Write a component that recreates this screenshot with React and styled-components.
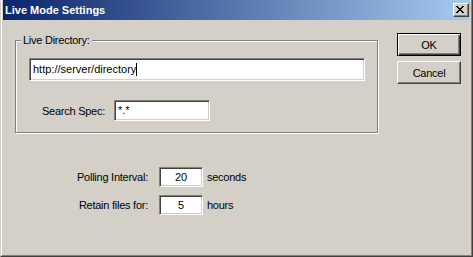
import React from 'react';
import styled, { createGlobalStyle } from 'styled-components';

const Global = createGlobalStyle`
  html, body { margin: 0; padding: 0; background: #d4d0c8; }
  body {
    font-family: "Liberation Sans", Arial, sans-serif;
    font-size: 11px;
    color: #000;
  }
  * { box-sizing: border-box; }
`;

const Frame = styled.div`
  width: 473px;
  height: 257px;
  background: #d4d0c8;
  border-left: 1px solid #d4d0c8;
  border-right: 1px solid #404040;
  border-bottom: 1px solid #404040;
`;

const FrameInner = styled.div`
  height: 100%;
  border-left: 1px solid #fff;
  border-right: 1px solid #808080;
  border-bottom: 1px solid #808080;
  padding: 0 1px 1px 1px;
  display: flex;
  flex-direction: column;
`;

const TitleBar = styled.div`
  height: 20px;
  display: flex;
  align-items: center;
  padding-left: 2px;
  padding-right: 1px;
  background: linear-gradient(to right, #0a246a, #a6caf0);
`;

const Title = styled.div`
  flex: 1;
  color: #fff;
  font-weight: bold;
  font-size: 11px;
  letter-spacing: 0;
  white-space: nowrap;
`;

const CloseButton = styled.div`
  width: 16px;
  height: 14px;
  background: #d4d0c8;
  border: 1px solid;
  border-color: #fff #404040 #404040 #fff;
  box-shadow: inset -1px -1px 0 #808080;
  display: flex;
  align-items: flex-start;
  justify-content: flex-start;
  padding: 2px 0 0 2px;
  svg { display: block; }
`;

const Body = styled.div`
  flex: 1;
  display: flex;
  padding: 12px 0 0 12px;
  margin-top: 1px;
`;

const LeftCol = styled.div`
  width: 363px;
  padding-top: 7px;
  display: flex;
  flex-direction: column;
`;

const GroupBox = styled.div`
  position: relative;
  height: 93px;
  border: 1px solid #808080;
  box-shadow: inset 1px 1px 0 #fff, 1px 1px 0 #fff;
  padding: 17px 0 0 13px;
  display: flex;
  flex-direction: column;
`;

const Legend = styled.div`
  position: absolute;
  top: -7px;
  left: 5px;
  padding: 0 2px;
  line-height: 13px;
  background: #d4d0c8;
  letter-spacing: -0.25px;
  white-space: nowrap;
`;

const Field = styled.div`
  width: ${p => p.$w}px;
  height: ${p => p.$h}px;
  background: #fff;
  border: 1px solid;
  border-color: #808080 #fff #fff #808080;
  box-shadow: inset 1px 1px 0 #404040, inset -1px -1px 0 #d4d0c8;
  display: flex;
  align-items: center;
  justify-content: ${p => (p.$center ? 'center' : 'flex-start')};
  padding-left: ${p => (p.$center ? 0 : 3)}px;
  white-space: nowrap;
  line-height: 13px;
`;

const Caret = styled.span`
  display: inline-block;
  width: 1px;
  height: 13px;
  background: #000;
`;

const SearchRow = styled.div`
  display: flex;
  align-items: center;
  margin-top: 19px;
  margin-left: 13px;
`;

const Label = styled.span`
  letter-spacing: -0.25px;
  white-space: nowrap;
`;

const SearchLabel = styled(Label)`
  width: 72px;
`;

const SettingsGrid = styled.div`
  margin-top: 34px;
  display: grid;
  grid-template-columns: 133px 44px auto;
  column-gap: 11px;
  row-gap: 8px;
  align-items: center;
`;

const UnitLabel = styled(Label)`
  margin-left: -7px;
`;

const RowLabel = styled(Label)`
  text-align: right;
`;

const ButtonCol = styled.div`
  margin-left: 19px;
  display: flex;
  flex-direction: column;
  gap: 5px;
`;

const Button = styled.div`
  width: 64px;
  height: 23px;
  display: flex;
  align-items: center;
  justify-content: center;
  background: #d4d0c8;
  border: 1px solid;
  border-color: ${p => (p.$default ? '#000' : '#fff #404040 #404040 #fff')};
  box-shadow: ${p =>
    p.$default
      ? 'inset 1px 1px 0 #fff, inset -1px -1px 0 #404040, inset -2px -2px 0 #808080'
      : 'inset -1px -1px 0 #808080'};
  letter-spacing: -0.25px;
`;

const CloseGlyph = () => (
  <svg width="8" height="7" viewBox="0 0 8 7" shapeRendering="crispEdges">
    <g fill="#000">
      <rect x="0" y="0" width="2" height="1" />
      <rect x="6" y="0" width="2" height="1" />
      <rect x="1" y="1" width="2" height="1" />
      <rect x="5" y="1" width="2" height="1" />
      <rect x="2" y="2" width="4" height="1" />
      <rect x="3" y="3" width="2" height="1" />
      <rect x="2" y="4" width="4" height="1" />
      <rect x="1" y="5" width="2" height="1" />
      <rect x="5" y="5" width="2" height="1" />
      <rect x="0" y="6" width="2" height="1" />
      <rect x="6" y="6" width="2" height="1" />
    </g>
  </svg>
);

export default function App() {
  return (
    <>
      <Global />
      <Frame>
        <FrameInner>
          <TitleBar>
            <Title>Live Mode Settings</Title>
            <CloseButton>
              <CloseGlyph />
            </CloseButton>
          </TitleBar>
          <Body>
            <LeftCol>
              <GroupBox>
                <Legend>Live Directory:</Legend>
                <Field $w={336} $h={23}>
                  http://server/directory<Caret />
                </Field>
                <SearchRow>
                  <SearchLabel>Search Spec:</SearchLabel>
                  <Field $w={96} $h={21}>*.*</Field>
                </SearchRow>
              </GroupBox>
              <SettingsGrid>
                <RowLabel>Polling Interval:</RowLabel>
                <Field $w={44} $h={20} $center>20</Field>
                <UnitLabel>seconds</UnitLabel>
                <RowLabel>Retain files for:</RowLabel>
                <Field $w={44} $h={20} $center>5</Field>
                <UnitLabel>hours</UnitLabel>
              </SettingsGrid>
            </LeftCol>
            <ButtonCol>
              <Button $default>OK</Button>
              <Button>Cancel</Button>
            </ButtonCol>
          </Body>
        </FrameInner>
      </Frame>
    </>
  );
}
